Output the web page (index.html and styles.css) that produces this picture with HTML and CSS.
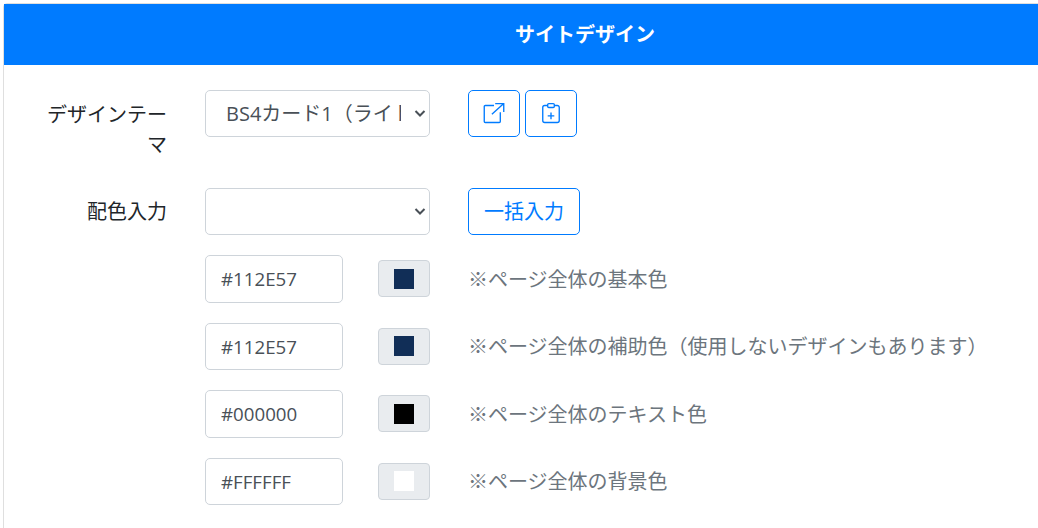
FILE: index.html
```html
<!DOCTYPE html>
<html lang="ja">
<head>
<meta charset="utf-8">
<title>サイトデザイン</title>
<link rel="stylesheet" href="styles.css">
</head>
<body>
<section class="card">
  <h2 class="card-header">サイトデザイン</h2>
  <div class="card-body">
    <div class="row row-theme">
      <label class="row-label">デザインテーマ</label>
      <select class="field field-select"><option>BS4カード1（ライト）</option></select>
      <div class="actions">
        <button class="btn btn-icon" type="button" aria-label="開く">
          <svg width="24" height="24" viewBox="0 0 16 16" fill="none" stroke="currentColor" stroke-width=".9"><path d="M8 3H2.200C1.800 3 1.500 3.300 1.500 3.700v9.900c0 .4.3.7.7.7h9.300c.4 0 .7-.3.7-.7V7.500"/><path d="M6.600 8.900 14.500 1.700M8.800 1.700h5.700v5.700"/></svg>
        </button>
        <button class="btn btn-icon" type="button" aria-label="貼り付け">
          <svg width="24" height="24" viewBox="0 0 16 16" fill="none" stroke="currentColor" stroke-width=".9"><path d="M5.800 3H3.800c-.8 0-1.300.6-1.300 1.300v8.700c0 .8.600 1.300 1.300 1.300h8.400c.8 0 1.300-.6 1.300-1.300V4.300c0-.8-.6-1.300-1.300-1.300h-2"/><rect x="5.800" y="1.700" width="4.400" height="2.600" rx=".7"/><path d="M8 7.700v4.500M5.800 9.900h4.400"/></svg>
        </button>
      </div>
    </div>
    <div class="row">
      <label class="row-label">配色入力</label>
      <select class="field field-select"><option></option></select>
      <div class="actions"><button class="btn btn-text" type="button">一括入力</button></div>
    </div>
    <div class="row">
      <span class="row-label"></span>
      <div class="color-group"><input class="field field-code" value="#112E57"><span class="swatch-box"><span class="swatch swatch-navy"></span></span></div>
      <p class="note">※ページ全体の基本色</p>
    </div>
    <div class="row">
      <span class="row-label"></span>
      <div class="color-group"><input class="field field-code" value="#112E57"><span class="swatch-box"><span class="swatch swatch-navy"></span></span></div>
      <p class="note">※ページ全体の補助色（使用しないデザインもあります）</p>
    </div>
    <div class="row">
      <span class="row-label"></span>
      <div class="color-group"><input class="field field-code" value="#000000"><span class="swatch-box"><span class="swatch swatch-black"></span></span></div>
      <p class="note">※ページ全体のテキスト色</p>
    </div>
    <div class="row">
      <span class="row-label"></span>
      <div class="color-group"><input class="field field-code" value="#FFFFFF"><span class="swatch-box"><span class="swatch swatch-white"></span></span></div>
      <p class="note">※ページ全体の背景色</p>
    </div>
  </div>
</section>
</body>
</html>
```
FILE: styles.css
```css
* { box-sizing: border-box; }
html, body { height: 100%; }
body {
  margin: 0;
  padding: 3px 0 0 3px;
  overflow: hidden;
  background: #fff;
  color: #212529;
  font-family: "Open Sans", "Noto Sans CJK JP", sans-serif;
  font-size: 20px;
  line-height: 1.5;
}
.card {
  width: 1164px;
  border: 1px solid #dfdfdf;
  border-radius: 4px 4px 0 0;
}
.card-header {
  margin: 0;
  height: 61px;
  background: #007bff;
  color: #fff;
  font-family: "Noto Sans CJK JP", sans-serif;
  font-size: 20px;
  font-weight: 700;
  line-height: 60px;
  text-align: center;
}
.card-body { padding: 24.500px 0 60px; }
.row {
  display: flex;
  align-items: flex-start;
  gap: 38px;
  margin-bottom: 20px;
}
.row-theme { margin-bottom: 29px; }
.row-label {
  flex: none;
  width: 163px;
  padding: 8px 0 0 43px;
  text-align: right;
  font-family: "Noto Sans CJK JP", sans-serif;
  font-size: 20px;
  line-height: 30px;
}
.row-theme .row-label { padding-top: 9px; }
.field {
  height: 47.500px;
  border: 1px solid #ced4da;
  border-radius: 5px;
  background: #fff;
  color: #495057;
  font-family: "Open Sans", "Noto Sans CJK JP", sans-serif;
  font-size: 20px;
}
.field-select {
  flex: none;
  width: 225px;
  padding: 0 28px 0 20px;
  appearance: none;
  background: #fff url("data:image/svg+xml,%3Csvg xmlns='http://www.w3.org/2000/svg' width='14' height='10' viewBox='0 0 14 10'%3E%3Cpath d='M2.500 3 7 7.500 11.500 3' fill='none' stroke='%23495057' stroke-width='2'/%3E%3C/svg%3E") no-repeat right 2px center;
}
.field-code {
  width: 138px;
  padding: 0 15px;
  font-size: 18.700px;
}
.actions { display: flex; gap: 5px; }
.btn {
  height: 47px;
  padding: 0;
  border: 1px solid #007bff;
  border-radius: 5px;
  background: #fff;
  color: #007bff;
  font-family: "Noto Sans CJK JP", sans-serif;
  font-size: 20px;
}
.btn-icon {
  display: flex;
  align-items: center;
  justify-content: center;
  width: 52px;
}
.btn-text { width: 112px; padding-bottom: 2px; }
.color-group {
  flex: none;
  display: flex;
  align-items: center;
  justify-content: space-between;
  width: 225px;
}
.swatch-box {
  display: flex;
  align-items: center;
  justify-content: center;
  width: 52px;
  height: 37px;
  border: 1px solid #ced4da;
  border-radius: 4px;
  background: #e9ecef;
}
.swatch { width: 20px; height: 20px; }
.swatch-navy { background: #112e57; }
.swatch-black { background: #000; }
.swatch-white { background: #fff; }
.note {
  margin: 0;
  padding-top: 5.500px;
  color: #6c757d;
  font-family: "Noto Sans CJK JP", sans-serif;
  font-size: 20px;
  line-height: 36px;
  white-space: nowrap;
}
```
